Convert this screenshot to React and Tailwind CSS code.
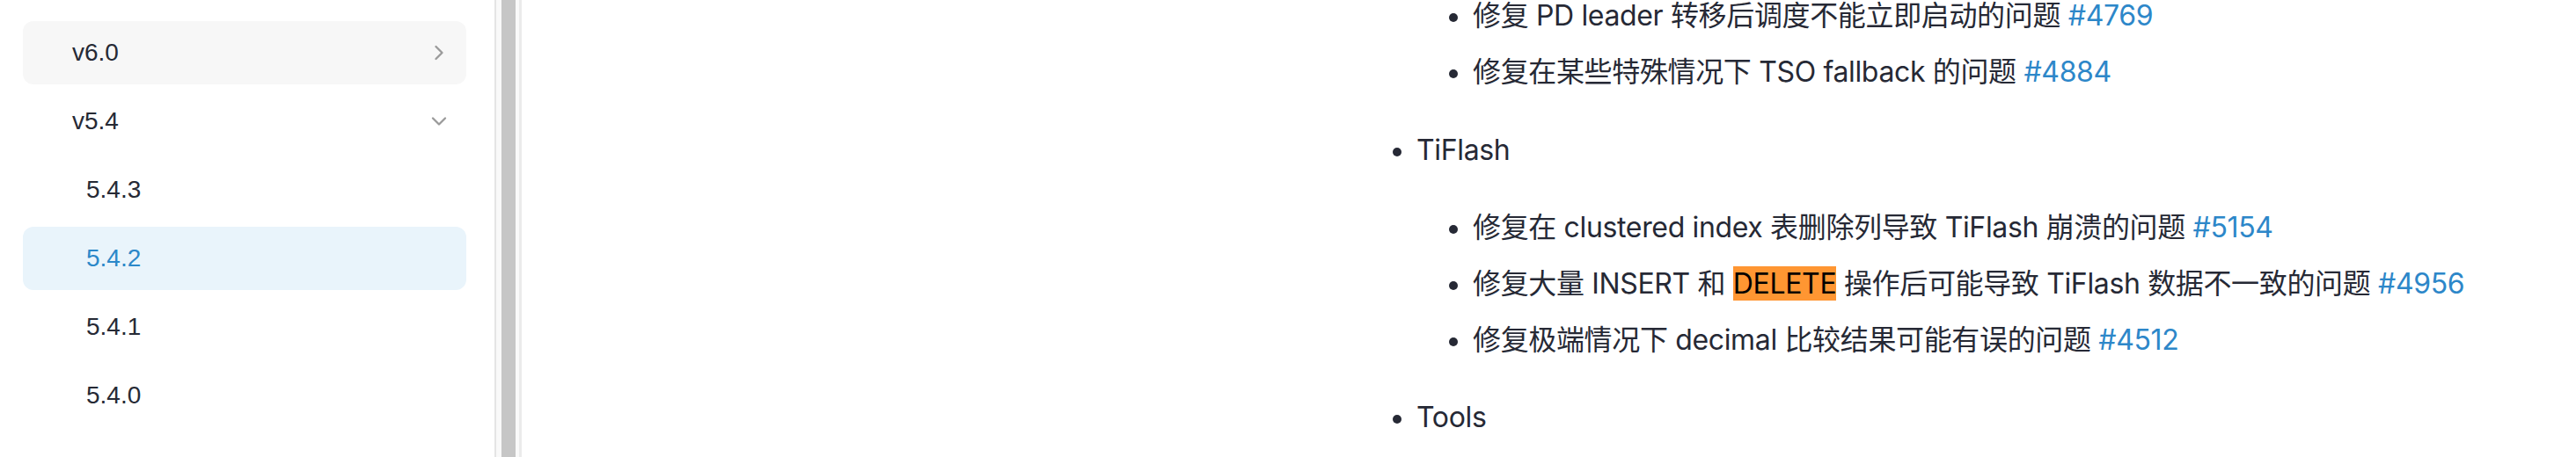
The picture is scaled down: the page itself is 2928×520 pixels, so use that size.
import { ChevronRight, ChevronDown } from 'lucide-react';

const SideItem = ({ label, sub, active, hover, icon }) => (
    <div
        className={`h-[72px] shrink-0 rounded-[12px] flex items-center justify-between pr-[17px] ${
            active ? 'bg-[#e9f4fb]' : hover ? 'bg-[#f7f7f7]' : ''
        } ${sub ? 'pl-[72px]' : 'pl-[56px]'}`}
    >
        <span className={`text-[28px] leading-none ${active ? 'text-[#2b88c9]' : 'text-[#262a35]'}`}>{label}</span>
        {icon === 'right' && <ChevronRight size={28} strokeWidth={2} className="text-[#9a9a9a]" />}
        {icon === 'down' && <ChevronDown size={28} strokeWidth={2} className="text-[#9a9a9a]" />}
    </div>
);

const Item = ({ children, sub, className = '' }) => (
    <div className={`flex items-center h-[52px] whitespace-nowrap ${sub ? 'pl-[64px]' : ''} ${className}`}>
        <span className="w-[10px] h-[10px] rounded-full bg-[#262935] mr-[17px] translate-y-[2px] shrink-0" />
        <span>{children}</span>
    </div>
);

const Issue = ({ n }) => <span className="text-[#2d87c9]">#{n}</span>;

export default function App() {
    return (
        <div className="h-[520px] w-[2928px] flex overflow-hidden bg-white font-['Inter','Noto_Sans_CJK_SC',sans-serif]">
            {/* sidebar */}
            <div className="w-[562px] shrink-0 pl-[26px] pr-[32px] pt-[24px] flex flex-col gap-[6px] font-['Liberation_Sans','Noto_Sans_CJK_SC',sans-serif]">
                <SideItem label="v6.0" hover icon="right" />
                <SideItem label="v5.4" icon="down" />
                <SideItem label="5.4.3" sub />
                <SideItem label="5.4.2" sub active />
                <SideItem label="5.4.1" sub />
                <SideItem label="5.4.0" sub />
            </div>

            {/* scrollbar */}
            <div className="flex h-full shrink-0">
                <div className="w-[2px] bg-[#e4e4e4]" />
                <div className="w-[6px] bg-[#f9f9f9]" />
                <div className="w-[16px] bg-[#c6c6c6]" />
                <div className="w-[4px] bg-[#f9f9f9]" />
                <div className="w-[3px] bg-[#ebebeb]" />
            </div>

            {/* content */}
            <div className="flex-1 pl-[990px] text-[32px] tracking-[-0.35px] text-[#262935]">
                <div className="-mt-[8px] flex flex-col">
                    <Item sub>修复 PD leader 转移后调度不能立即启动的问题 <Issue n="4769" /></Item>
                    <Item sub className="mt-[12px]">修复在某些特殊情况下 TSO fallback 的问题 <Issue n="4884" /></Item>
                    <Item className="mt-[37px]">TiFlash</Item>
                    <Item sub className="mt-[36px]">修复在 clustered index 表删除列导致 TiFlash 崩溃的问题 <Issue n="5154" /></Item>
                    <Item sub className="mt-[12px]">
                        修复大量 INSERT 和 <span className="bg-[#ff9632] text-black">DELETE</span> 操作后可能导致 TiFlash 数据不一致的问题 <Issue n="4956" />
                    </Item>
                    <Item sub className="mt-[12px]">修复极端情况下 decimal 比较结果可能有误的问题 <Issue n="4512" /></Item>
                    <Item className="mt-[36px]">Tools</Item>
                </div>
            </div>
        </div>
    );
}
